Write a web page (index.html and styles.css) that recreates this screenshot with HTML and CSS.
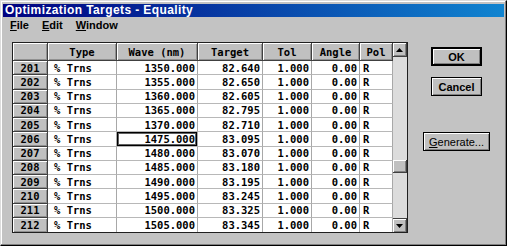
FILE: index.html
```html
<!DOCTYPE html>
<html lang="en">
<head>
  <meta charset="UTF-8">
  <meta name="viewport" content="width=device-width, initial-scale=1.0">
  <title>Optimization Targets - Equality</title>
  <link rel="stylesheet" href="styles.css">
</head>
<body>

  <div class="window">
    <div class="titlebar">Optimization Targets - Equality</div>

    <div class="menubar">
      <span class="menu"><u>F</u>ile</span>
      <span class="menu"><u>E</u>dit</span>
      <span class="menu"><u>W</u>indow</span>
    </div>

    <div class="client">
      <div class="grid">
        <table class="targets">
          <colgroup>
            <col class="c-num">
            <col class="c-type">
            <col class="c-wave">
            <col class="c-target">
            <col class="c-tol">
            <col class="c-angle">
            <col class="c-pol">
          </colgroup>
          <thead>
            <tr>
              <th class="corner"></th>
              <th>Type</th>
              <th>Wave (nm)</th>
              <th>Target</th>
              <th>Tol</th>
              <th>Angle</th>
              <th>Pol</th>
            </tr>
          </thead>
          <tbody>
            <tr><th>201</th><td>% Trns</td><td class="num">1350.000</td><td class="num">82.640</td><td class="num">1.000</td><td class="num">0.00</td><td class="pol">R</td></tr>
            <tr><th>202</th><td>% Trns</td><td class="num">1355.000</td><td class="num">82.650</td><td class="num">1.000</td><td class="num">0.00</td><td class="pol">R</td></tr>
            <tr><th>203</th><td>% Trns</td><td class="num">1360.000</td><td class="num">82.605</td><td class="num">1.000</td><td class="num">0.00</td><td class="pol">R</td></tr>
            <tr><th>204</th><td>% Trns</td><td class="num">1365.000</td><td class="num">82.795</td><td class="num">1.000</td><td class="num">0.00</td><td class="pol">R</td></tr>
            <tr><th>205</th><td>% Trns</td><td class="num">1370.000</td><td class="num">82.710</td><td class="num">1.000</td><td class="num">0.00</td><td class="pol">R</td></tr>
            <tr><th>206</th><td>% Trns</td><td class="num focus">1475.000</td><td class="num">83.095</td><td class="num">1.000</td><td class="num">0.00</td><td class="pol">R</td></tr>
            <tr><th>207</th><td>% Trns</td><td class="num">1480.000</td><td class="num">83.070</td><td class="num">1.000</td><td class="num">0.00</td><td class="pol">R</td></tr>
            <tr><th>208</th><td>% Trns</td><td class="num">1485.000</td><td class="num">83.180</td><td class="num">1.000</td><td class="num">0.00</td><td class="pol">R</td></tr>
            <tr><th>209</th><td>% Trns</td><td class="num">1490.000</td><td class="num">83.195</td><td class="num">1.000</td><td class="num">0.00</td><td class="pol">R</td></tr>
            <tr><th>210</th><td>% Trns</td><td class="num">1495.000</td><td class="num">83.245</td><td class="num">1.000</td><td class="num">0.00</td><td class="pol">R</td></tr>
            <tr><th>211</th><td>% Trns</td><td class="num">1500.000</td><td class="num">83.325</td><td class="num">1.000</td><td class="num">0.00</td><td class="pol">R</td></tr>
            <tr><th>212</th><td>% Trns</td><td class="num">1505.000</td><td class="num">83.345</td><td class="num">1.000</td><td class="num">0.00</td><td class="pol">R</td></tr>
          </tbody>
        </table>

        <div class="scrollbar">
          <div class="arrow">
            <svg width="7" height="4" viewBox="0 0 7 4"><path d="M3.5 0 L7 4 L0 4 Z" fill="#000"/></svg>
          </div>
          <div class="track">
            <div class="thumb"></div>
          </div>
          <div class="arrow">
            <svg width="7" height="4" viewBox="0 0 7 4"><path d="M0 0 L7 0 L3.5 4 Z" fill="#000"/></svg>
          </div>
        </div>
      </div>

      <div class="buttons">
        <button type="button" class="btn default">OK</button>
        <button type="button" class="btn">Cancel</button>
        <button type="button" class="btn wide"><u>G</u>enerate...</button>
      </div>
    </div>
  </div>

</body>
</html>
```

FILE: styles.css
```css
body {
  margin: 0;
  padding: 0;
  background-color: #c0c0c0;
  font-family: "Liberation Sans", Arial, sans-serif;
}

.window {
  width: 507px;
  height: 246px;
  box-sizing: border-box;
  padding: 2px;
  background-color: #c3c3c3;
  border: 1px solid;
  border-color: #dcdcdc #000 #000 #dcdcdc;
  box-shadow: inset -1px -1px #808080, inset 1px 1px #fff;
}

.titlebar {
  margin-top: 1px;
  height: 13px;
  padding-left: 2px;
  background: linear-gradient(to right, #000080, #1084d0);
  color: #fff;
  font-size: 12px;
  font-weight: bold;
  letter-spacing: 0.4px;
  line-height: 13px;
  white-space: nowrap;
}

.menubar {
  display: flex;
  gap: 13px;
  height: 16px;
  padding-left: 7px;
  font-size: 11px;
  font-weight: bold;
  line-height: 16px;
  color: #000;
}

.client {
  display: flex;
  align-items: flex-start;
  padding: 9px 0 0 9px;
}

/* grid */

.grid {
  display: flex;
  border: 1px solid #202020;
  background-color: #fff;
}

.targets {
  table-layout: fixed;
  width: 380px;
  border-collapse: separate;
  border-spacing: 0;
  font-family: "DejaVu Sans Mono", "Liberation Mono", monospace;
  font-size: 10.5px;
  font-weight: bold;
  color: #000;
}

.c-num { width: 35px; }
.c-type { width: 69px; }
.c-wave { width: 81px; }
.c-target { width: 65px; }
.c-tol { width: 49px; }
.c-angle { width: 48px; }
.c-pol { width: 33px; }

.targets th,
.targets td {
  padding: 0;
  overflow: hidden;
  white-space: nowrap;
  line-height: 12px;
}

.targets th {
  background-color: #c0c0c0;
  border-right: 1px solid #404040;
  border-bottom: 1px solid #404040;
  box-shadow: inset 1px 1px #fff, inset -1px -1px #909090;
  text-align: center;
  font-weight: bold;
}

.targets thead tr {
  height: 18px;
}

.targets tbody tr {
  height: 14.25px;
}

.targets td {
  border-right: 1px solid #a8a8a8;
  border-bottom: 1px solid #b8b8b8;
  padding-left: 6px;
}

.targets td.num {
  text-align: right;
  padding: 0 2px 0 0;
}

.targets td.pol {
  padding-left: 3px;
}

.targets td.focus {
  box-shadow: inset 0 0 0 1px #000, inset 0 0 0 2px #606060;
}

.targets tbody tr:last-child th,
.targets tbody tr:last-child td {
  border-bottom: none;
}

/* scrollbar */

.scrollbar {
  width: 14px;
  display: flex;
  flex-direction: column;
  background-color: #dcdcdc;
}

.arrow {
  height: 14px;
  box-sizing: border-box;
  display: flex;
  align-items: center;
  justify-content: center;
  background-color: #c0c0c0;
  border-right: 1px solid #404040;
  border-bottom: 1px solid #404040;
  box-shadow: inset 1px 1px #fff, inset -1px -1px #808080;
}

.arrow:last-child {
  border-top: 1px solid #404040;
  border-bottom: none;
}

.track {
  flex: 1;
  position: relative;
}

.thumb {
  position: absolute;
  left: 0;
  top: 103px;
  width: 14px;
  height: 13px;
  box-sizing: border-box;
  background-color: #c0c0c0;
  border-right: 1px solid #404040;
  border-bottom: 1px solid #404040;
  box-shadow: inset 1px 1px #fff, inset -1px -1px #808080;
}

/* buttons */

.buttons {
  display: flex;
  flex-direction: column;
  align-items: center;
  width: 67px;
  margin-left: 15px;
  padding-top: 5px;
}

.btn {
  width: 51px;
  height: 19px;
  padding: 0;
  margin-bottom: 11px;
  background-color: #c0c0c0;
  border: 1px solid #000;
  box-shadow: inset 1px 1px #fff, inset -1px -1px #808080;
  font-family: "Liberation Sans", Arial, sans-serif;
  font-size: 11px;
  font-weight: bold;
  color: #000;
}

.btn.default {
  box-shadow: inset 0 0 0 1px #000, inset 2px 2px #fff, inset -2px -2px #808080;
}

.btn.wide {
  width: 67px;
  margin-top: 25px;
  font-weight: normal;
}
```
